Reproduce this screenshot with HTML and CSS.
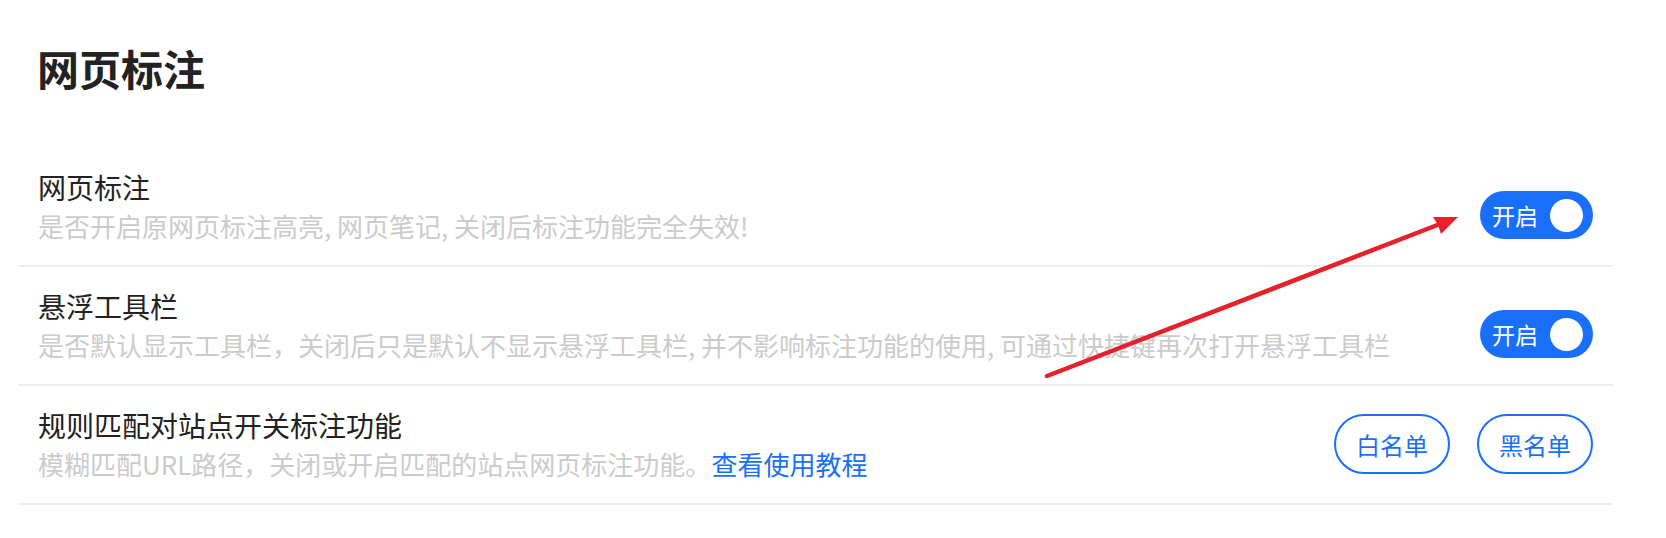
FILE: index.html
```html
<!DOCTYPE html>
<html lang="zh-CN">
<head>
  <meta charset="UTF-8" />
  <title>网页标注</title>
  <link rel="stylesheet" href="styles.css">
</head>
<body>

  <main class="page">
    <h1 class="page-title">网页标注</h1>

    <div class="setting-list">

      <div class="setting-row">
        <div class="setting-info">
          <div class="setting-name">网页标注</div>
          <div class="setting-desc">是否开启原网页标注高亮, 网页笔记, 关闭后标注功能完全失效!</div>
        </div>
        <button class="switch">开启<span class="knob"></span></button>
      </div>

      <div class="setting-row">
        <div class="setting-info">
          <div class="setting-name">悬浮工具栏</div>
          <div class="setting-desc">是否默认显示工具栏，关闭后只是默认不显示悬浮工具栏, 并不影响标注功能的使用, 可通过快捷键再次打开悬浮工具栏</div>
        </div>
        <button class="switch">开启<span class="knob"></span></button>
      </div>

      <div class="setting-row">
        <div class="setting-info">
          <div class="setting-name">规则匹配对站点开关标注功能</div>
          <div class="setting-desc">模糊匹配URL路径，关闭或开启匹配的站点网页标注功能。<a class="doc-link" href="#">查看使用教程</a></div>
        </div>
        <div class="list-actions">
          <button class="outline-btn">白名单</button>
          <button class="outline-btn">黑名单</button>
        </div>
      </div>

    </div>
  </main>

  <!-- red arrow drawn over the screenshot -->
  <svg class="annotation-arrow" width="1666" height="538" viewBox="0 0 1666 538">
    <line x1="1047" y1="376" x2="1440" y2="224" stroke="#e8202a" stroke-width="4.5" stroke-linecap="round" />
    <polygon points="1458,217 1433,217 1438,225 1441,234" fill="#e8202a" />
  </svg>

</body>
</html>
```

FILE: styles.css
```css
body {
  font-family: "Noto Sans CJK SC", "Noto Sans", sans-serif;
  background: #fff;
  color: #222;
  margin: 0;
  padding: 0;
  position: relative;
}

.page {
  padding: 38px 0 0 18px;
  width: 1595px;
}

.page-title {
  font-size: 42px;
  line-height: 60px;
  font-weight: 700;
  margin: 0 0 50px 19px;
  color: #222;
}

.setting-row {
  display: flex;
  align-items: center;
  padding: 20px 20px 21px;
  border-bottom: 2px solid #ebeff4;
}

.setting-info {
  flex-grow: 1;
}

.setting-name {
  font-size: 28px;
  line-height: 39px;
  color: #222;
}

.setting-desc {
  font-size: 26px;
  line-height: 37px;
  color: #cbcbcb;
}

.doc-link {
  color: #1a6ffa;
  text-decoration: none;
}

.switch {
  width: 113px;
  height: 48px;
  margin-top: 18px;
  border: none;
  border-radius: 24px;
  background-color: #1a6ffa;
  color: #fff;
  font-family: inherit;
  font-size: 23px;
  display: flex;
  align-items: center;
  padding: 0 10px 0 12px;
  flex-shrink: 0;
  cursor: pointer;
}

.switch .knob {
  width: 33px;
  height: 33px;
  border-radius: 50%;
  background: #fff;
  margin-left: auto;
}

.list-actions {
  display: flex;
  gap: 27px;
  flex-shrink: 0;
}

.outline-btn {
  width: 116px;
  height: 60px;
  border: 2px solid #1a6ffa;
  border-radius: 30px;
  background: #fff;
  color: #1a6ffa;
  font-family: inherit;
  font-size: 24px;
  cursor: pointer;
}

.annotation-arrow {
  position: absolute;
  top: 0;
  left: 0;
  pointer-events: none;
}
```
